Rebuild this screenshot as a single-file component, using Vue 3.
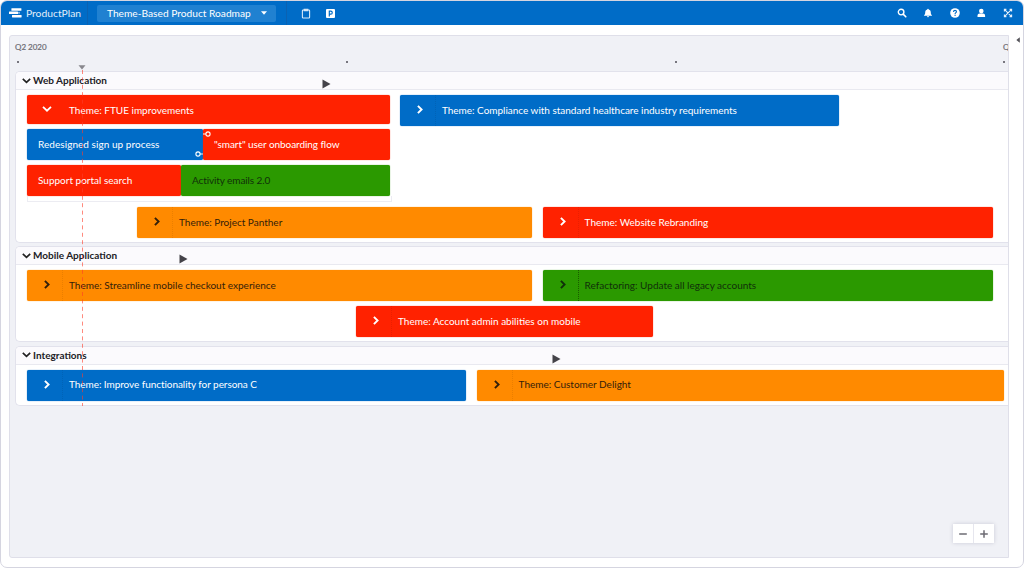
<template>
  <div class="window">
    <header class="topbar">
      <div class="brand">
        <svg width="13" height="10" viewBox="0 0 13 10" fill="#fff"><rect x="2.4" y="0.2" width="10" height="2.6" rx="0.4"/><rect x="0" y="3.6" width="9" height="2.5" rx="0.4"/><rect x="9" y="3.9" width="2" height="1.8" opacity="0.5"/><rect x="3" y="6.9" width="9.6" height="2.6" rx="0.4"/></svg>
        <span class="brand-name">ProductPlan</span>
      </div>
      <div class="picker-wrap">
        <button class="picker">
          <span class="picker-label">Theme-Based Product Roadmap</span>
          <svg width="6" height="4" viewBox="0 0 6 4"><path d="M0 0.3h6L3 3.7z" fill="#fff"/></svg>
        </button>
      </div>
      <div class="tools">
        <svg width="10" height="11" viewBox="0 0 10 11" fill="none" stroke="#d6e8f8" stroke-width="1.1"><rect x="1.4" y="2" width="7.2" height="8" rx="0.8"/><path d="M3.2 2.6V1.2h3.6v1.4z" fill="#d6e8f8"/></svg>
        <svg width="9" height="9" viewBox="0 0 9 9"><rect width="9" height="9" rx="1" fill="#fff"/><path d="M3.3 7.4V2.2h1.5a1.35 1.35 0 0 1 0 2.9H3.3" fill="none" stroke="#006cc7" stroke-width="1.2"/></svg>
      </div>
      <div class="actions">
        <svg width="10" height="10" viewBox="0 0 10 10" fill="none" stroke="#fff" stroke-linecap="round"><circle cx="4.1" cy="4.1" r="2.8" stroke-width="1.4"/><path d="M6.4 6.4L8.8 8.8" stroke-width="1.6"/></svg>
        <svg width="10" height="10" viewBox="0 0 10 10" fill="#fff"><path d="M5 0.8c.5 0 .7.3.7.7C7.2 1.9 7.8 3 7.8 4.4c0 1.5.4 2 1.1 2.6v.8H1.1V7c.7-.6 1.1-1.1 1.1-2.6C2.2 3 2.8 1.9 4.3 1.5c0-.4.2-.7.7-.7z"/><path d="M3.9 8.2h2.2a1.1 1.1 0 0 1-2.2 0z"/></svg>
        <svg width="10" height="10" viewBox="0 0 10 10"><circle cx="5" cy="5" r="4.8" fill="#fff"/><path d="M3.5 3.9c0-1 .7-1.5 1.5-1.5s1.5.5 1.5 1.3c0 1-1.4 1-1.4 2.2" fill="none" stroke="#006cc7" stroke-width="1.1"/><rect x="4.5" y="6.7" width="1.2" height="1.2" fill="#006cc7"/></svg>
        <svg width="10" height="10" viewBox="0 0 10 10" fill="#fff"><circle cx="5.3" cy="3.1" r="2.3"/><path d="M1.5 9.1V7.7c0-1.4 1-2.1 2.1-2.1H7c1.1 0 2.1.7 2.1 2.1v1.4z"/></svg>
        <svg width="10" height="10" viewBox="0 0 10 10" fill="none" stroke="#e4f0fb" stroke-width="1.1"><path d="M1.4 3.4v-2h2M6.6 1.4h2v2M8.6 6.6v2h-2M3.4 8.6h-2v-2M1.7 1.7l6.6 6.6M8.3 1.7L1.7 8.3"/></svg>
      </div>
    </header>

    <main class="content">
      <section class="board">
        <div class="axis">
          <div class="axis-labels"><span>Q2 2020</span><span>Q3 2020</span></div>
          <div class="axis-dots"><i v-for="n in 4" :key="n"></i></div>
        </div>

        <div v-for="lane in lanes" :key="lane.name" class="lane">
          <div class="lane-head">
            <svg width="9" height="6" viewBox="0 0 9 6" fill="none" stroke="#222" stroke-width="1.7"><path d="M0.8 0.8L4.5 4.4 8.2 0.8"/></svg>
            <span class="lane-name">{{ lane.name }}</span>
            <svg class="milestone" :style="{ left: lane.milestone + 'px' }" width="9" height="10" viewBox="0 0 9 10"><path d="M0.5 0.5L8.5 5 0.5 9.5z" fill="#444349"/></svg>
          </div>
          <div class="lane-body">
            <div v-for="(row, r) in lane.rows" :key="r" class="row" :class="row.kind">
              <div
                v-for="bar in row.bars"
                :key="bar.text"
                class="bar"
                :class="[bar.color, { plain: bar.plain, open: bar.open }]"
                :style="{ marginLeft: bar.gap + 'px', width: bar.width + 'px' }"
              >
                <span v-if="!bar.plain" class="toggle">
                  <svg v-if="bar.open" width="10" height="6" viewBox="0 0 10 6" fill="none" stroke="currentColor" stroke-width="1.8"><path d="M1 0.9L5 4.7 9 0.9"/></svg>
                  <svg v-else width="6" height="9" viewBox="0 0 6 9" fill="none" stroke="currentColor" stroke-width="1.9"><path d="M0.9 0.8L4.6 4.5 0.9 8.2"/></svg>
                </span>
                <span class="bar-text" :style="{ letterSpacing: (bar.ls || 0) + 'px' }">{{ bar.text }}</span>
                <svg v-if="bar.link" class="link" :class="bar.link" width="8" height="6" viewBox="0 0 8 6" fill="none" stroke="#fff" stroke-width="1.1"><circle :cx="bar.link === 'out' ? 3 : 5" cy="3" r="2.1"/><path :d="bar.link === 'out' ? 'M5.1 3H8' : 'M0 3h2.9'"/></svg>
              </div>
            </div>
          </div>
        </div>

        <div class="today">
          <svg width="8" height="5" viewBox="0 0 8 5"><path d="M0.5 0.3h7L4 4.6z" fill="#88878d"/></svg>
          <svg width="2" height="336" viewBox="0 0 2 336"><path d="M1.5 0V336" stroke="#ff3c28" stroke-opacity="0.6" stroke-width="1" stroke-dasharray="4 3.4"/></svg>
        </div>

        <div class="zoom">
          <button><svg width="8" height="8" viewBox="0 0 8 8"><path d="M0.2 4h7.6" stroke="#6c6b73" stroke-width="1.5"/></svg></button>
          <button><svg width="8" height="8" viewBox="0 0 8 8"><path d="M0.2 4h7.6M4 0.2v7.6" stroke="#6c6b73" stroke-width="1.5"/></svg></button>
        </div>
      </section>
      <aside class="drawer">
        <svg width="4" height="6" viewBox="0 0 4 6"><path d="M3.8 0.2v5.6L0.3 3z" fill="#55545a"/></svg>
      </aside>
    </main>
  </div>
</template>

<script setup>
// gap = distance from the previous bar (or the lane's left padding), width in px
const lanes = [
  {
    name: 'Web Application',
    milestone: 306,
    rows: [
      {
        kind: 'theme-open',
        bars: [
          { text: 'Theme: FTUE improvements', color: 'red', gap: 0, width: 362.6, open: true },
          { text: 'Theme: Compliance with standard healthcare industry requirements', color: 'blue', gap: 10.4, width: 439, ls: -0.02 }
        ]
      },
      {
        kind: 'child',
        bars: [
          { text: 'Redesigned sign up process', color: 'blue', gap: 0, width: 176, plain: true, link: 'out', ls: 0.05 },
          { text: '"smart" user onboarding flow', color: 'red', gap: 0, width: 186.6, plain: true, link: 'in', ls: -0.07 }
        ]
      },
      {
        kind: 'child last',
        bars: [
          { text: 'Support portal search', color: 'red', gap: 0, width: 154, plain: true },
          { text: 'Activity emails 2.0', color: 'green', gap: 0, width: 208.6, plain: true, ls: -0.1 }
        ]
      },
      {
        kind: '',
        bars: [
          { text: 'Theme: Project Panther', color: 'orange', gap: 110, width: 395 },
          { text: 'Theme: Website Rebranding', color: 'red', gap: 10.6, width: 450 }
        ]
      }
    ]
  },
  {
    name: 'Mobile Application',
    milestone: 163,
    rows: [
      {
        kind: '',
        bars: [
          { text: 'Theme: Streamline mobile checkout experience', color: 'orange', gap: 0, width: 505 },
          { text: 'Refactoring: Update all legacy accounts', color: 'green', gap: 10.6, width: 450 }
        ]
      },
      {
        kind: '',
        bars: [
          { text: 'Theme: Account admin abilities on mobile', color: 'red', gap: 329, width: 297 }
        ]
      }
    ]
  },
  {
    name: 'Integrations',
    milestone: 536,
    rows: [
      {
        kind: '',
        bars: [
          { text: 'Theme: Improve functionality for persona C', color: 'blue', gap: 0, width: 439, ls: -0.06 },
          { text: 'Theme: Customer Delight', color: 'orange', gap: 10.6, width: 527 }
        ]
      }
    ]
  }
]
</script>

<style>
body {
  background: #fff;
}
</style>

<style scoped>
* {
  box-sizing: border-box;
}
svg {
  display: block;
  flex: none;
}
.window {
  width: 1024px;
  height: 568px;
  border: 1px solid #d5d5e0;
  border-radius: 7px;
  overflow: hidden;
  display: flex;
  flex-direction: column;
  font-family: Lato, "Liberation Sans", sans-serif;
  font-size: 10px;
  background: #fff;
}
.topbar {
  height: 24px;
  flex: none;
  display: flex;
  background: #006cc7;
  color: #fff;
}
.brand {
  width: 87px;
  padding: 0 0 1px 8px;
  display: flex;
  align-items: center;
  gap: 4px;
  border-right: 1px solid #0b62b2;
}
.brand-name {
  font-size: 10.3px;
  color: #e2effa;
  white-space: nowrap;
}
.picker-wrap {
  width: 199px;
  padding-left: 9px;
  display: flex;
  align-items: center;
  border-right: 1px solid #0b62b2;
}
.picker {
  width: 179px;
  height: 17px;
  border: none;
  border-radius: 2px;
  padding: 0 9px 0 10px;
  display: flex;
  align-items: center;
  justify-content: space-between;
  background: #2081d1;
  color: #fff;
  font: inherit;
  font-size: 10.2px;
}
.picker-label {
  white-space: nowrap;
  padding-bottom: 1px;
}
.tools {
  display: flex;
  align-items: center;
  gap: 15px;
  padding-left: 14px;
}
.actions {
  margin-left: auto;
  padding: 0 10px 1px 0;
  display: flex;
  align-items: center;
  gap: 16.6px;
}
.content {
  flex: 1;
  display: flex;
  padding: 10px 0 9px 8px;
}
.board {
  position: relative;
  width: 1000px;
  padding-left: 6px;
  border: 1px solid #dfdfe9;
  border-radius: 3px 0 0 3px;
  background: #f0f1f6;
  overflow: hidden;
}
.axis {
  height: 35px;
  padding-top: 6px;
}
.axis-labels {
  display: flex;
  margin-left: -1px;
  font-size: 8px;
  line-height: 11px;
  color: #6c6b73;
}
.axis-labels span {
  width: 988px;
  flex: none;
  -webkit-text-stroke: 0.2px #6c6b73;
}
.axis-dots {
  display: flex;
  justify-content: space-between;
  width: 989.5px;
  padding: 8px 0 0 1px;
}
.axis-dots i {
  width: 2px;
  height: 2px;
  background: #77767e;
}
.lane {
  margin: 0 0 3.4px -1px;
  border: 1px solid #e2e2ec;
  border-right: none;
  border-radius: 5px 0 0 5px;
  background: #fff;
  overflow: hidden;
}
.lane-head {
  position: relative;
  height: 18px;
  padding: 0 0 0 6px;
  display: flex;
  align-items: center;
  gap: 2px;
  background: #fbfafd;
  border-bottom: 1px solid #e9e9f0;
}
.lane-name {
  padding-bottom: 1px;
  font-size: 10px;
  font-weight: 700;
  color: #222126;
  white-space: nowrap;
}
.milestone {
  position: absolute;
  top: 7px;
}
.lane-body {
  padding: 5px 0 4px 11px;
  display: flex;
  flex-direction: column;
  gap: 5px;
}
.row {
  display: flex;
  height: 31px;
}
.theme-open {
  margin-bottom: -2px;
}
.last {
  position: relative;
  margin-bottom: 6px;
}
/* bottom edge of the expanded theme container */
.last::after {
  content: "";
  position: absolute;
  left: 0;
  top: 31px;
  width: 363px;
  height: 5px;
  border: 1px solid #ececf2;
  border-top: none;
}
.bar {
  position: relative;
  flex: none;
  height: 31px;
  padding-bottom: 2px;
  display: flex;
  align-items: center;
  border-radius: 2px;
  color: #fff;
}
.red {
  background: #ff2200;
  box-shadow: 0 0 1px #ff2200;
}
.blue {
  background: #006cc7;
  box-shadow: 0 0 1px #006cc7;
}
.green {
  background: #2b9900;
  box-shadow: 0 0 1px #2b9900;
  color: #10300a;
}
.orange {
  background: #ff8a00;
  box-shadow: 0 0 1px #ff8a00;
  color: #33200a;
}
.toggle {
  width: 36px;
  height: 31px;
  margin: 0 6px -2px 0;
  padding: 0 0 2px 5px;
  display: flex;
  align-items: center;
  justify-content: center;
  border-right: 1px dotted rgba(0, 0, 0, 0.08);
}
.green .toggle {
  border-right-color: rgba(0, 0, 0, 0.4);
}
.open {
  height: 29px;
  padding-bottom: 0;
}
.open .toggle {
  height: 29px;
  margin-bottom: 0;
  border-right-color: transparent;
}
.plain {
  padding-left: 11px;
}
.bar-text {
  white-space: nowrap;
}
.link {
  position: absolute;
}
.out {
  right: 0;
  bottom: 3px;
}
.in {
  left: 0;
  top: 2px;
}
.today {
  position: absolute;
  left: 68px;
  top: 29px;
  display: flex;
  flex-direction: column;
  align-items: center;
}
.zoom {
  position: absolute;
  right: 14px;
  bottom: 14px;
  display: flex;
  gap: 1px;
  background: #e6e6ee;
  box-shadow: 0 0 4px #c9c9d5;
}
.zoom button {
  width: 20px;
  height: 19px;
  border: none;
  padding: 0;
  display: flex;
  align-items: center;
  justify-content: center;
  background: #fff;
}
.drawer {
  padding: 2px 0 0 7px;
}
</style>
